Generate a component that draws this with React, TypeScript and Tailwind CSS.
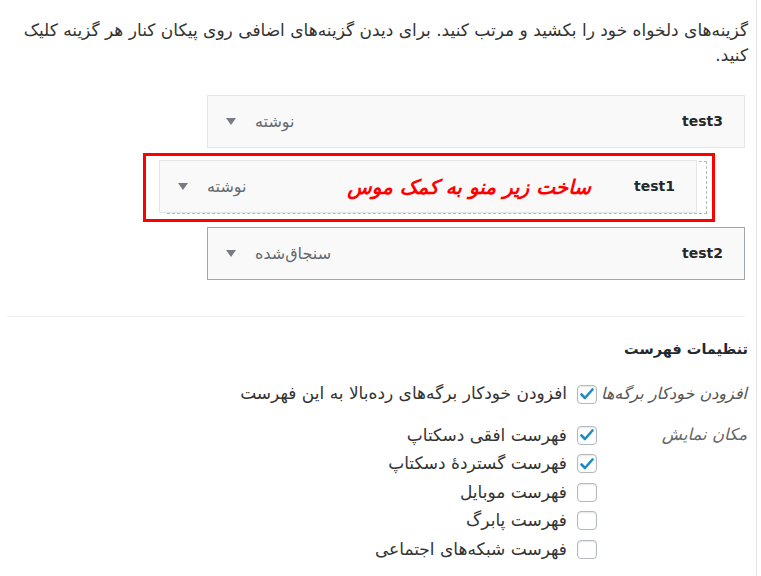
import React from 'react'

const font = { fontFamily: '"DejaVu Sans", sans-serif' }

const Arrow = () => (
  <svg width="10" height="7" viewBox="0 0 10 7" className="shrink-0">
    <path d="M0 0h10L5 7z" fill="#787c82" />
  </svg>
)

const Check = ({ checked }: { checked?: boolean }) => (
  <span className="flex h-[19px] w-[20px] shrink-0 items-center justify-center rounded-[4px] border border-[#b4b9be] bg-white shadow-[inset_0_1px_2px_rgba(0,0,0,0.1)]">
    {checked && (
      <svg width="14" height="12" viewBox="0 0 14 12">
        <path d="M1.5 6.5l3.5 3.5 7.5-8.5" fill="none" stroke="#1e8cbe" strokeWidth="2.6" strokeLinecap="round" strokeLinejoin="round" />
      </svg>
    )}
  </span>
)

const Item = ({ title, type, dark, children }: { title: string; type: string; dark?: boolean; children?: React.ReactNode }) => (
  <div
    className={`flex h-[53px] w-[538px] items-center border bg-[#f9f9f9] pr-[21px] pl-[18px] ${dark ? 'border-[#a0a5aa]' : 'border-[#e5e5e5]'}`}
  >
    <span className="text-[14px] font-bold text-[#23282d]">{title}</span>
    {children}
    <span className="mr-auto flex items-center gap-[19px] text-[16px] text-[#646970]">
      <span>{type}</span>
      <Arrow />
    </span>
  </div>
)

const options = [
  { label: 'فهرست افقی دسکتاپ', checked: true },
  { label: 'فهرست گستردهٔ دسکتاپ', checked: true },
  { label: 'فهرست موبایل' },
  { label: 'فهرست پابرگ' },
  { label: 'فهرست شبکه‌های اجتماعی' },
]

export default function App() {
  return (
    <div dir="rtl" className="h-[576px] w-[761px] overflow-hidden bg-white" style={font}>
      <div className="mr-[4px] h-full border-r border-[#e5e5e5]">
        <p className="pt-[18px] pr-[8px] pl-[10px] text-[17px] leading-[25px] text-[#333]">
          گزینه‌های دلخواه خود را بکشید و مرتب کنید. برای دیدن گزینه‌های اضافی روی پیکان کنار هر گزینه کلیک کنید.
        </p>

        <div className="mt-[27px] mr-[11px] flex flex-col items-start gap-[13px]">
          <Item title="test3" type="نوشته" />
          <div className="relative mr-[38px] h-[53px] w-[540px] border border-dashed border-[#b4b9be]">
            <div className="absolute top-[-2px] right-[9px]">
              <Item title="test1" type="نوشته">
                <span className="mr-[43px] text-[20px] font-bold italic text-[#ff0000]">ساخت زیر منو به کمک موس</span>
              </Item>
            </div>
            <div className="absolute top-[-9px] right-[-9px] h-[69px] w-[572px] border-[3px] border-[#ff0000]" />
          </div>
          <Item title="test2" type="سنجاق‌شده" dark />
        </div>

        <div className="mt-[36px] mr-[11px] ml-[7px] border-t border-[#eee]" />

        <h2 className="mt-[20px] pr-[8px] text-[14.5px] leading-[24px] font-bold text-[#23282d]">تنظیمات فهرست</h2>

        <div className="mt-[19px] pr-[9px] text-[17px] text-[#333]">
          <div className="flex h-[28px] items-center">
            <span className="w-[150px] shrink-0 text-[16px] whitespace-nowrap italic text-[#555]">افزودن خودکار برگه‌ها</span>
            <Check checked />
            <span className="mr-[10px]">افزودن خودکار برگه‌های رده‌بالا به این فهرست</span>
          </div>
          <div className="mt-[13px] flex">
            <span className="flex h-[28.5px] w-[150px] shrink-0 items-center text-[16.5px] italic text-[#666]">مکان نمایش</span>
            <div className="flex flex-col">
              {options.map((o) => (
                <div key={o.label} className="flex h-[28.5px] items-center">
                  <Check checked={o.checked} />
                  <span className="mr-[10px]">{o.label}</span>
                </div>
              ))}
            </div>
          </div>
        </div>
      </div>
    </div>
  )
}
